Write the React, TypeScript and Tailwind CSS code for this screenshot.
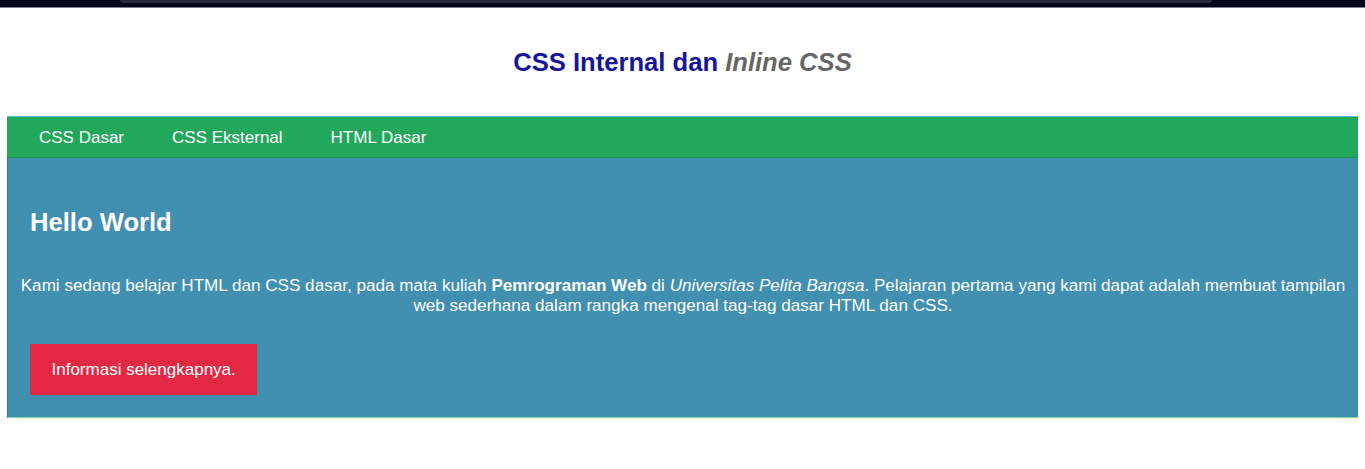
export default function App() {
  return (
    <div className="min-h-[469px] bg-white" style={{ fontFamily: '"Liberation Sans", Arial, sans-serif' }}>
      <div className="h-[7px] bg-[#05051c] relative">
        <div className="ml-[120px] w-[1092px] h-[3px] bg-[#262c3c] rounded-b-[4px]" />
      </div>
      <div className="h-px bg-[#7a7f8c]" />
      <div className="h-[108px] flex items-center justify-center">
        <h1 className="text-[25.6px] font-bold text-[#16169c]">
          CSS Internal dan <i className="text-[#666666]">Inline CSS</i>
        </h1>
      </div>
      <div className="mx-[7px] border-t border-[#5bc0de]">
        <nav className="h-[41px] bg-[#22a85a] border-b border-[#1b8f4a] flex items-center pt-[2px] pl-[32px] gap-[48px] text-white text-[17px]">
          <span>CSS Dasar</span>
          <span>CSS Eksternal</span>
          <span>HTML Dasar</span>
        </nav>
        <div className="bg-[#418fb1] border-l border-[#1f8a52] border-b border-b-[#7ed09a] px-[12px] pt-[49px] pb-[22px] text-white">
          <h2 className="text-[25.6px] font-bold ml-[10px] leading-[30px]">Hello World</h2>
          <p className="text-center text-[17.1px] leading-[20px] mt-[39px] -mx-[2px]">
            Kami sedang belajar HTML dan CSS dasar, pada mata kuliah <b>Pemrograman Web</b> di <i>Universitas Pelita Bangsa</i>. Pelajaran pertama yang kami dapat adalah membuat tampilan web sederhana dalam rangka mengenal tag-tag dasar HTML dan CSS.
          </p>
          <div className="mt-[28px] ml-[10px] inline-flex items-center h-[51px] px-[21.5px] bg-[#e22843] text-[17px]">
            Informasi selengkapnya.
          </div>
        </div>
      </div>
    </div>
  );
}
